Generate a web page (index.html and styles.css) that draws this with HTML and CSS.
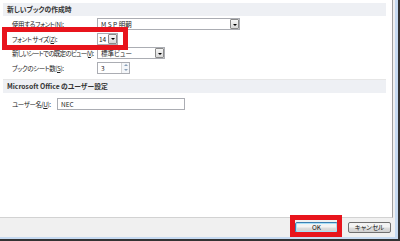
FILE: index.html
```html
<!DOCTYPE html>
<html lang="ja">
<head>
    <meta charset="utf-8" />
    <title>Excel のオプション</title>
    <link rel="stylesheet" href="styles.css">
</head>
<body>
    <div class="frame">
        <main class="panel">
            <section class="group">
                <h3 class="group-head">新しいブックの作成時</h3>
                <div class="rows">
                    <div class="row">
                        <label class="label">使用するフォント(<u>N</u>):</label>
                        <div class="combo combo-font"><span>M S P 明朝</span><i class="drop"></i></div>
                    </div>
                    <div class="row">
                        <label class="label">フォント サイズ(<u>Z</u>):</label>
                        <div class="combo combo-size"><span>14</span><i class="drop"></i></div>
                    </div>
                    <div class="row">
                        <label class="label label-long">新しいシートでの既定のビュー(<u>V</u>):</label>
                        <div class="combo combo-view"><span>標準ビュー</span><i class="drop"></i></div>
                    </div>
                    <div class="row">
                        <label class="label">ブックのシート数(<u>S</u>):</label>
                        <div class="spin"><span>3</span><i class="spin-btns"><b class="up"></b><b class="down"></b></i></div>
                    </div>
                </div>
            </section>

            <section class="group group-user">
                <h3 class="group-head">Microsoft Office のユーザー設定</h3>
                <div class="rows">
                    <div class="row">
                        <label class="label label-short">ユーザー名(<u>U</u>):</label>
                        <div class="textbox">NEC</div>
                    </div>
                </div>
            </section>
        </main>

        <footer class="footer">
            <button class="btn btn-default">OK</button>
            <button class="btn">キャンセル</button>
        </footer>

        <!-- red callouts drawn over the dialog -->
        <div class="mark mark-size"></div>
        <div class="mark mark-ok"></div>
    </div>
</body>
</html>
```

FILE: styles.css
```css
* {
    box-sizing: border-box;
    font-family: "Noto Sans CJK JP", "Liberation Sans", sans-serif;
    font-feature-settings: "palt";
}

body {
    margin: 0;
    width: 400px;
    height: 241px;
    overflow: hidden;
    background: #fff;
}

.frame {
    position: relative;
    display: flex;
    flex-direction: column;
    height: 241px;
    background: #f0f0f0;
    border-right: 2px solid #333;
    border-bottom: 2px solid #333;
    box-shadow: inset -3px -2px 0 #c6daf1;
}

.panel {
    height: 218px;
    margin-right: 5px;
    padding: 3px 6px 0 3px;
    background: #fff;
    border-right: 1px solid #a0a0a0;
    border-bottom: 1px solid #d2d2d2;
}

.group-head {
    margin: 0;
    height: 13px;
    padding-left: 4px;
    background: #eef0f4;
    color: #333;
    font-size: 6.8px;
    font-weight: bold;
    line-height: 13px;
}

.group-user {
    margin-top: 5px;
    border-top: 1px solid #e6e6e6;
}

.rows {
    display: flex;
    flex-direction: column;
    gap: 2.5px;
    padding: 2px 0 0 9px;
}

.group-user .rows {
    padding-top: 5px;
}

.row {
    display: flex;
    align-items: center;
    height: 12px;
}

.label {
    width: 85px;
    color: #222;
    font-size: 6.5px;
    letter-spacing: -0.45px;
    white-space: nowrap;
}

/* kanji-heavy label, kept clear of its combo */
.label-long {
    letter-spacing: -0.75px;
}

.label-short {
    width: 45px;
}

.combo,
.spin,
.textbox {
    display: flex;
    align-items: center;
    height: 12px;
    padding-left: 3px;
    border: 1px solid #abadb3;
    background: #fff;
    color: #222;
    font-size: 6.5px;
}

.combo span,
.spin span {
    flex: 1;
}

.combo-font { width: 143px; }
.combo-size { width: 21px; padding-left: 1px; }
.combo-view { width: 68px; }
.spin { width: 33px; }
.textbox { width: 128px; }

.drop {
    position: relative;
    width: 9px;
    height: 10px;
    border: 1px solid #8a8a8a;
    border-radius: 1px;
    background: linear-gradient(#f6f6f6, #d8d8d8);
}

.drop::after {
    content: "";
    position: absolute;
    left: 1.5px;
    top: 3.5px;
    border-left: 2.5px solid transparent;
    border-right: 2.5px solid transparent;
    border-top: 2.5px solid #000;
}

.spin-btns {
    display: flex;
    flex-direction: column;
    width: 8px;
    height: 10px;
    border-left: 1px solid #d5d5d5;
}

.spin-btns b {
    position: relative;
    flex: 1;
    background: #f4f6f9;
}

.spin-btns b::after {
    content: "";
    position: absolute;
    left: 1.5px;
    top: 1px;
    border-left: 2px solid transparent;
    border-right: 2px solid transparent;
}

.spin-btns .up::after { border-bottom: 2px solid #8aa0b8; }
.spin-btns .down::after { border-top: 2px solid #8aa0b8; }

.footer {
    display: flex;
    justify-content: flex-end;
    gap: 10px;
    padding: 4px 7px 0 0;
}

.btn {
    width: 43px;
    height: 11px;
    padding: 0;
    border: 1px solid #707070;
    border-radius: 2px;
    background: linear-gradient(#f3f3f3 45%, #dddddd 55%, #cfcfcf);
    color: #111;
    font-size: 6.5px;
    line-height: 9px;
}

.btn-default {
    border-color: #3c7fb1;
    box-shadow: inset 0 0 0 1px #a8e0f8;
}

.mark {
    position: absolute;
    border: 5px solid #e8141c;
}

.mark-size {
    left: 2px;
    top: 27px;
    width: 126px;
    height: 23px;
}

.mark-ok {
    left: 290px;
    top: 215px;
    width: 52px;
    height: 22px;
}
```
